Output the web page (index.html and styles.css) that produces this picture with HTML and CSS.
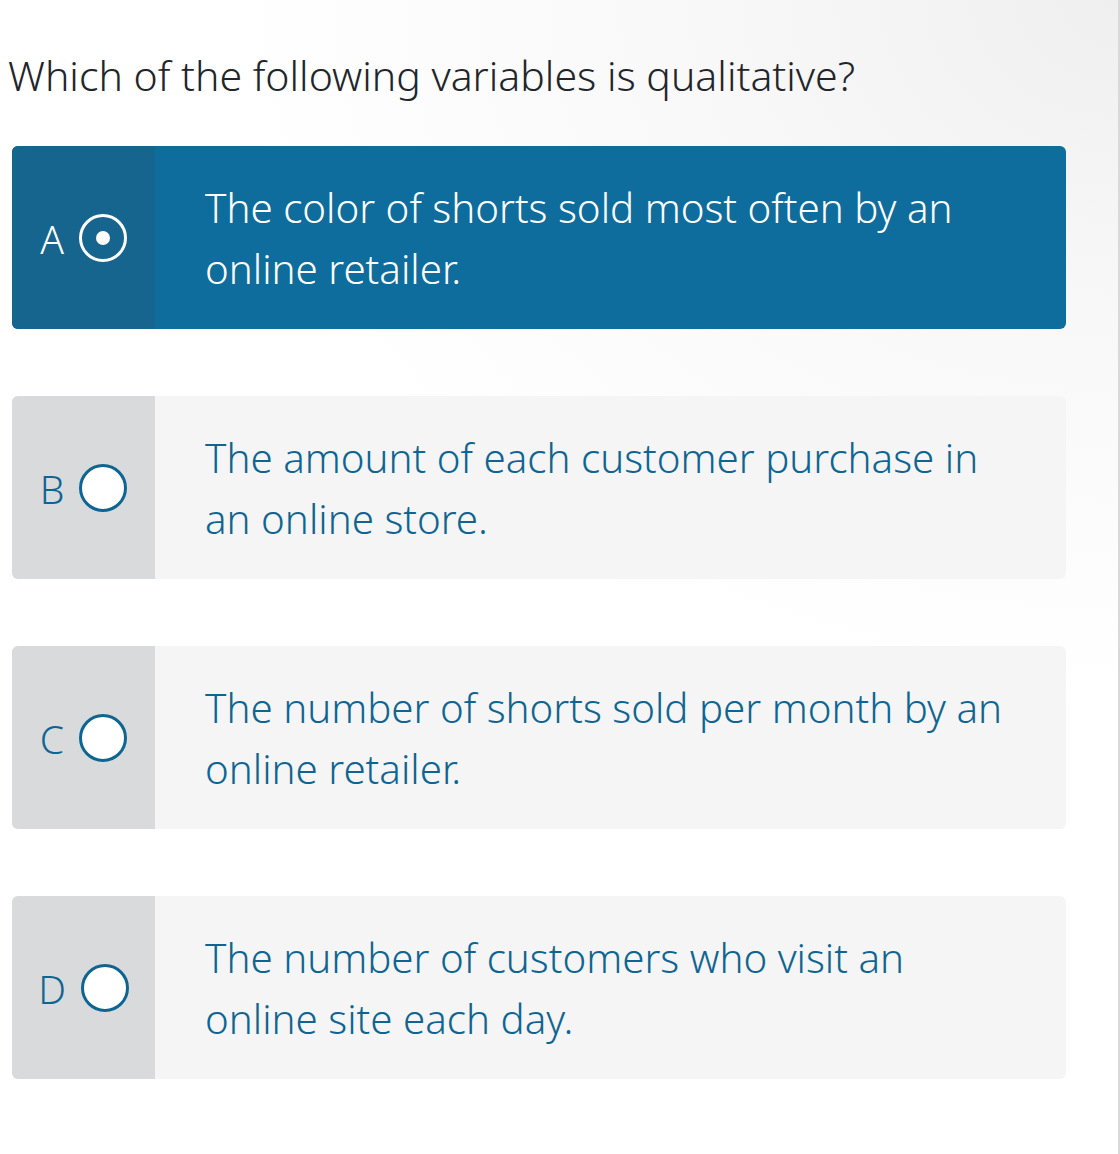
FILE: index.html
```html
<!DOCTYPE html>
<html lang="en">
<head>
<meta charset="utf-8">
<title>Question</title>
<link rel="stylesheet" href="styles.css">
</head>
<body>
<div class="page">
  <main class="content">
    <h1 class="question">Which of the following variables is qualitative?</h1>
    <div class="options">
      <div class="option selected">
        <div class="option-key">
          <span class="letter">A</span>
          <span class="radio"><span class="dot"></span></span>
        </div>
        <div class="option-text">The color of shorts sold most often by an online retailer.</div>
      </div>
      <div class="option">
        <div class="option-key">
          <span class="letter">B</span>
          <span class="radio"></span>
        </div>
        <div class="option-text">The amount of each customer purchase in an online store.</div>
      </div>
      <div class="option">
        <div class="option-key">
          <span class="letter">C</span>
          <span class="radio"></span>
        </div>
        <div class="option-text">The number of shorts sold per month by an online retailer.</div>
      </div>
      <div class="option">
        <div class="option-key">
          <span class="letter">D</span>
          <span class="radio"></span>
        </div>
        <div class="option-text">The number of customers who visit an online site each day.</div>
      </div>
    </div>
  </main>
</div>
</body>
</html>
```
FILE: styles.css
```css
html, body {
  margin: 0;
  padding: 0;
}
body {
  font-family: "Noto Sans", "Open Sans", sans-serif;
  background: #ffffff;
}
.page {
  width: 1118px;
  min-height: 1154px;
  border-right: 2px solid #d9d9d9;
  background: radial-gradient(ellipse 900px 700px at 1120px 0px, #efefef 0%, #f8f8f8 45%, #ffffff 100%);
}
.content {
  padding: 47px 0 0 12px;
}
.question {
  margin: 0 0 43px -4px;
  font-weight: 350;
  font-size: 41px;
  line-height: 56px;
  color: #22252a;
}
.options {
  display: flex;
  flex-direction: column;
  gap: 67px;
  width: 1054px;
}
.option {
  display: flex;
  height: 183px;
  border-radius: 6px;
  overflow: hidden;
  background: #f5f5f6;
  color: #0f6592;
}
.option.selected {
  background: #0e6d9c;
  color: #ffffff;
}
.option-key {
  width: 143px;
  flex: none;
  display: flex;
  align-items: center;
  justify-content: center;
  gap: 15px;
  background: #d9dadc;
}
.option.selected .option-key {
  background: #15658e;
}
.letter {
  font-size: 39px;
  font-weight: 350;
  line-height: 1;
  padding-top: 2px;
}
.radio {
  width: 42px;
  height: 42px;
  border: 3px solid #0f6592;
  border-radius: 50%;
  background: #ffffff;
  display: flex;
  align-items: center;
  justify-content: center;
}
.option.selected .radio {
  border-color: #ffffff;
  background: transparent;
}
.dot {
  width: 14px;
  height: 14px;
  border-radius: 50%;
  background: #ffffff;
}
.option-text {
  flex: 1;
  display: flex;
  align-items: center;
  padding: 0 55px 0 50px;
  font-size: 40.3px;
  font-weight: 350;
  line-height: 61px;
}
```
